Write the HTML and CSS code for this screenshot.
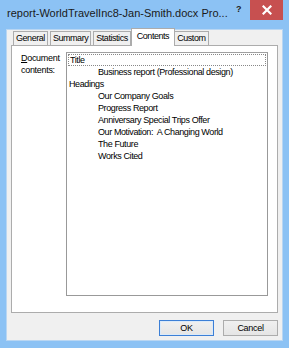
FILE: index.html
```html
<!DOCTYPE html>
<html>
<head>
<meta charset="utf-8">
<link rel="stylesheet" href="styles.css">
</head>
<body>
<div class="window">
  <div class="titlebar">
    <div class="title">report-WorldTravelInc8-Jan-Smith.docx Pro...</div>
    <div class="help">?</div>
    <div class="close">
      <svg width="10" height="10" viewBox="0 0 10 10"><path d="M1.5 1.5 L8.5 8.5 M8.5 1.5 L1.5 8.5" stroke="#fff" stroke-width="2.2" stroke-linecap="square"/></svg>
    </div>
  </div>
  <div class="client">
    <div class="tabs">
      <div class="tab">General</div>
      <div class="tab">Summary</div>
      <div class="tab">Statistics</div>
      <div class="tab active">Contents</div>
      <div class="tab">Custom</div>
    </div>
    <div class="panel">
      <div class="label"><u>D</u>ocument<br>contents:</div>
      <div class="listbox">
        <div class="item focus">Title</div>
        <div class="item sub">Business report (Professional design)</div>
        <div class="item">Headings</div>
        <div class="item sub">Our Company Goals</div>
        <div class="item sub">Progress Report</div>
        <div class="item sub">Anniversary Special Trips Offer</div>
        <div class="item sub">Our Motivation:&nbsp; A Changing World</div>
        <div class="item sub">The Future</div>
        <div class="item sub">Works Cited</div>
      </div>
    </div>
    <div class="buttons">
      <div class="btn default">OK</div>
      <div class="btn">Cancel</div>
    </div>
  </div>
</div>
</body>
</html>
```
FILE: styles.css
```css
html, body {
  margin: 0;
  padding: 0;
  width: 289px;
  height: 348px;
  overflow: hidden;
  background: #8cc2f4;
}
.window {
  width: 289px;
  height: 348px;
  display: flex;
  flex-direction: column;
  font-family: "Liberation Sans", Arial, sans-serif;
  color: #000;
}
.titlebar {
  height: 29px;
  display: flex;
  align-items: flex-start;
  flex: none;
}
.title {
  font-size: 11px;
  margin: 6px 0 0 7px;
  line-height: 15px;
  width: 224px;
  white-space: nowrap;
  color: #1a1a1a;
}
.help {
  font-size: 9px;
  font-weight: bold;
  margin: 4px 0 0 5px;
  width: 12px;
  color: #222;
}
.close {
  width: 33px;
  height: 20px;
  background: #c75050;
  display: flex;
  align-items: center;
  justify-content: center;
  margin-left: auto;
  margin-right: 6px;
}
.client {
  flex: 1;
  margin: 0 6px 7px 6px;
  background: #f0f0f0;
  border: 1px solid #b9d6f2;
  display: flex;
  flex-direction: column;
  padding: 0 4px 0 4px;
}
.tabs {
  display: flex;
  height: 15px;
  align-items: flex-end;
  padding-left: 2px;
  position: relative;
  z-index: 1;
}
.tab {
  font-size: 9px;
  letter-spacing: -0.45px;
  height: 13px;
  line-height: 13px;
  padding: 0 2px;
  border: 1px solid #acacac;
  border-bottom: none;
  background: #f0f0f0;
  margin-right: 2px;
  color: #000;
}
.tab.active {
  background: #fff;
  height: 17px;
  line-height: 15px;
  padding: 0 5px;
  margin: 0 0 -1px -2px;
  position: relative;
}
.tab.active + .tab {
  margin-left: -1px;
}
.panel {
  height: 268px;
  background: #fff;
  border: 1px solid #acacac;
  display: flex;
  padding: 6px 0 0 9px;
  box-sizing: border-box;
  flex: none;
}
.label {
  font-size: 9px;
  letter-spacing: -0.3px;
  line-height: 12px;
  width: 45px;
  flex: none;
  color: #000;
}
.listbox {
  width: 202px;
  height: 244px;
  box-sizing: border-box;
  border: 1px solid #999;
  border-top-color: #a0a0a0;
  background: #fff;
  font-size: 9px;
  letter-spacing: -0.4px;
  line-height: 12px;
  padding: 1px 0 0 1px;
}
.item {
  padding-left: 1px;
  white-space: nowrap;
  height: 12px;
}
.item.sub {
  padding-left: 30px;
}
.item.focus {
  border: 1px dotted #888;
  height: 10px;
  line-height: 10px;
  margin-right: 1px;
}
.buttons {
  display: flex;
  justify-content: flex-end;
  gap: 9px;
  margin-top: 7px;
  padding-right: 0;
}
.btn {
  width: 53px;
  height: 14px;
  line-height: 14px;
  text-align: center;
  font-size: 9px;
  letter-spacing: -0.3px;
  border: 1px solid #acacac;
  background: linear-gradient(#f0f0f0, #e5e5e5);
}
.btn.default {
  border-color: #3c7fd6;
  box-shadow: inset 0 0 0 1px #dbeaf9;
}
```
